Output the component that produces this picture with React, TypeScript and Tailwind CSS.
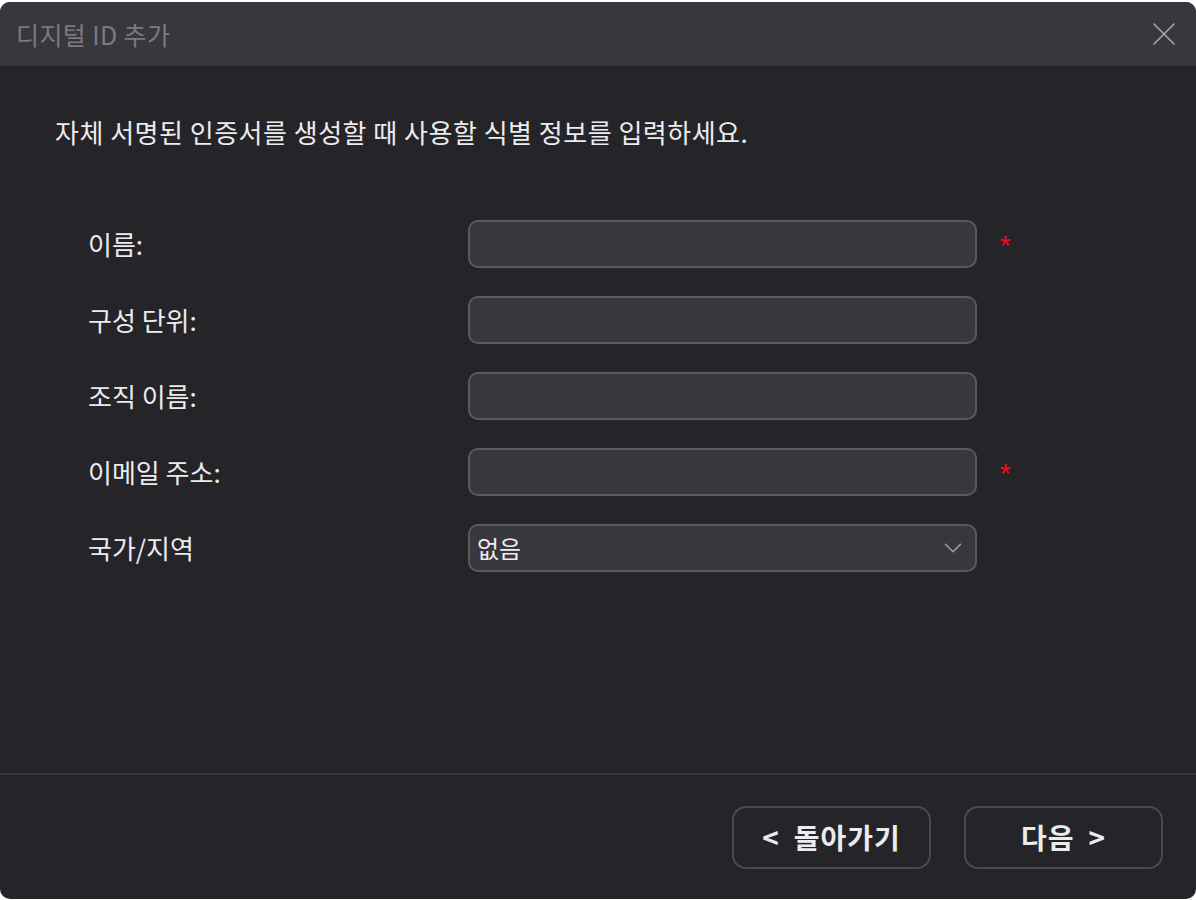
import { ChevronDown, X } from 'lucide-react';

const font = { fontFamily: '"Noto Sans CJK KR", "Noto Sans", sans-serif' };

const fields = [
  { label: '이름:', required: true },
  { label: '구성 단위:', required: false },
  { label: '조직 이름:', required: false },
  { label: '이메일 주소:', required: true },
];

function TextField() {
  return <div className="h-[48px] w-[509px] rounded-[10px] border-2 border-[#5a595f] bg-[#38373d]" />;
}

export default function App() {
  return (
    <div className="min-h-screen bg-white pt-[2px]" style={font}>
      <div className="w-[1196px] h-[897px] rounded-[10px] overflow-hidden bg-[#252429] flex flex-col">
        {/* title bar */}
        <div className="h-[64px] shrink-0 bg-[#38373d] flex items-center justify-between pl-4 pr-[12px]">
          <span className="text-[25px] leading-[28px] tracking-[0.4px] text-[#7b7a80]">디지털 ID 추가</span>
          <X className="w-[40px] h-[40px] text-[#a9a9b0]" strokeWidth={0.9} />
        </div>

        {/* body */}
        <div className="flex-1 pl-[55px] pt-[52px]">
          <p className="text-[26px] leading-[28px] tracking-[0.5px] text-[#ececef]">
            자체 서명된 인증서를 생성할 때 사용할 식별 정보를 입력하세요.
          </p>

          <div className="mt-[74px] pl-[33px] flex flex-col gap-[28px]">
            {fields.map((f) => (
              <div key={f.label} className="flex items-center">
                <span className="w-[380px] text-[26px] leading-[28px] text-[#ececef]">{f.label}</span>
                <TextField />
                {f.required && (
                  <span className="ml-[23px] translate-y-[2px] font-['Liberation_Sans'] text-[28px] leading-none text-[#e81123]">
                    *
                  </span>
                )}
              </div>
            ))}

            <div className="flex items-center">
              <span className="w-[380px] text-[26px] leading-[28px] text-[#ececef]">국가/지역</span>
              <div className="h-[48px] w-[509px] rounded-[10px] border-2 border-[#5a595f] bg-[#38373d] flex items-center justify-between pl-[7px] pr-[7px]">
                <span className="text-[24px] leading-[28px] text-[#ececef]">없음</span>
                <ChevronDown className="w-[30px] h-[30px] text-[#a3a3a9]" strokeWidth={1.2} />
              </div>
            </div>
          </div>
        </div>

        <div className="h-[2px] shrink-0 bg-[#38373d]" />

        {/* footer */}
        <div className="h-[124px] shrink-0 flex items-center justify-end gap-[33px] pr-[33px]">
          <button className="w-[199px] h-[63px] rounded-[14px] border-2 border-[#4b4a50] bg-[#252429] text-[28px] font-bold tracking-[1px] text-[#ececef] flex items-center justify-center gap-[14px]">
            <span>&lt;</span>
            <span>돌아가기</span>
          </button>
          <button className="w-[199px] h-[63px] rounded-[14px] border-2 border-[#4b4a50] bg-[#252429] text-[28px] font-bold tracking-[1px] text-[#ececef] flex items-center justify-center gap-[14px]">
            <span>다음</span>
            <span>&gt;</span>
          </button>
        </div>
      </div>
    </div>
  );
}
